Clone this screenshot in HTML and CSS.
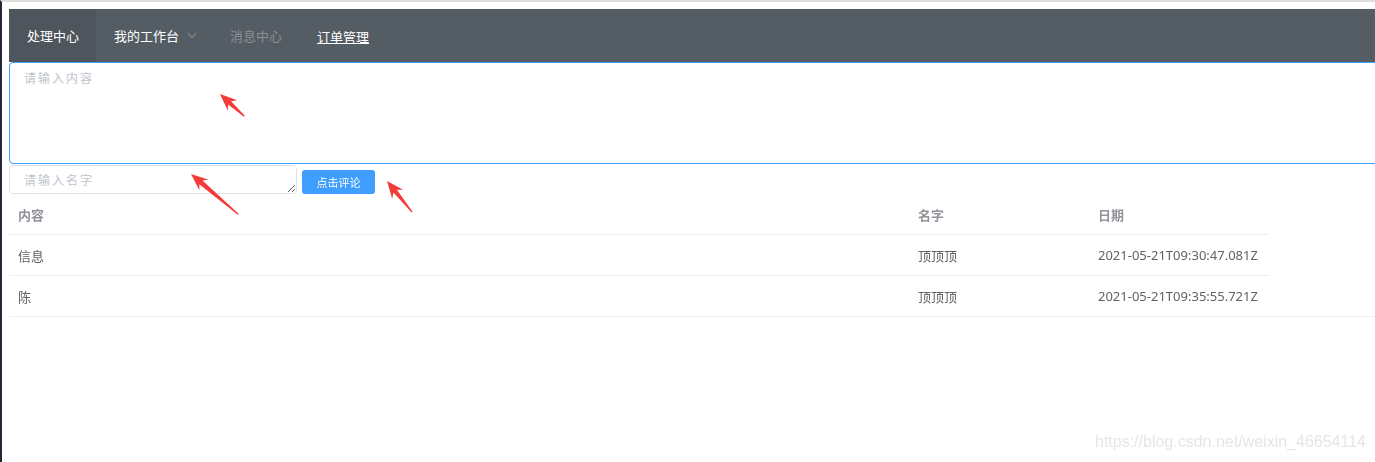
FILE: index.html
```html
<!DOCTYPE html>
<html lang="zh">
<head>
  <meta charset="UTF-8" />
  <meta name="viewport" content="width=device-width, initial-scale=1.0" />
  <title>评论</title>
  <link rel="stylesheet" href="styles.css">
</head>
<body>

<div class="app">
  <ul class="menu">
    <li class="menu-item active">处理中心</li>
    <li class="menu-item">我的工作台 <span class="caret"></span></li>
    <li class="menu-item disabled">消息中心</li>
    <li class="menu-item"><a href="#">订单管理</a></li>
  </ul>

  <textarea class="content-input" placeholder="请输入内容"></textarea>

  <div class="form-row">
    <textarea class="name-input" placeholder="请输入名字"></textarea>
    <button class="submit-btn">点击评论</button>
  </div>

  <div class="table-wrap">
    <table class="comments">
      <thead>
        <tr>
          <th class="col-content">内容</th>
          <th class="col-name">名字</th>
          <th class="col-date">日期</th>
        </tr>
      </thead>
      <tbody>
        <tr>
          <td>信息</td>
          <td>顶顶顶</td>
          <td>2021-05-21T09:30:47.081Z</td>
        </tr>
        <tr>
          <td>陈</td>
          <td>顶顶顶</td>
          <td>2021-05-21T09:35:55.721Z</td>
        </tr>
      </tbody>
    </table>
  </div>
</div>

<!-- screenshot annotations -->
<svg class="marks" width="1375" height="462" viewBox="0 0 1375 462">
  <g fill="#f53a3a">
    <polygon transform="translate(220 94) rotate(42.5)" points="0,0 17,-7 13,-2.2 33,-0.6 33,0.6 13,2.2 17,7" />
    <polygon transform="translate(191 174) rotate(40.4)" points="0,0 17,-7 13,-2.4 62,-0.6 62,0.6 13,2.4 17,7" />
    <polygon transform="translate(387 181) rotate(51.1)" points="0,0 17,-7 13,-2.2 40,-0.6 40,0.6 13,2.2 17,7" />
  </g>
</svg>

<div class="watermark">https://blog.csdn.net/weixin_46654114</div>

</body>
</html>
```

FILE: styles.css
```css
html {
  overflow: hidden;
}
body {
  margin: 0;
  height: 460px;
  font-family: "Noto Sans", "Noto Sans CJK SC", sans-serif;
  background-color: #ffffff;
  border-top: 2px solid #dedede;
  border-left: 2px solid #272636;
  position: relative;
}
.app {
  width: 1375px;
  padding: 7px 0 0 7px;
}
.menu {
  list-style: none;
  margin: 0;
  padding: 0;
  display: flex;
  height: 53px;
  background-color: #545c64;
}
.menu-item {
  display: flex;
  align-items: center;
  padding: 0 17px 0 18px;
  font-size: 13px;
  color: #ffffff;
  cursor: pointer;
}
.menu-item.active {
  background-color: #4e555c;
}
.menu-item.disabled {
  color: #8c9096;
  cursor: not-allowed;
}
.menu-item a {
  color: #ffffff;
  text-decoration: underline;
  padding-top: 2px;
}
.caret {
  display: inline-block;
  width: 5px;
  height: 5px;
  margin: -4px 0 0 10px;
  border-right: 1px solid #8c9096;
  border-bottom: 1px solid #8c9096;
  transform: rotate(45deg);
}
textarea {
  font-family: "Noto Sans", "Noto Sans CJK SC", sans-serif;
  box-sizing: border-box;
  display: block;
  outline: none;
}
textarea::placeholder {
  color: #c0c4cc;
  letter-spacing: 2px;
}
.content-input {
  width: 1380px;
  height: 102px;
  margin: 0;
  padding: 6px 14px;
  font-size: 12px;
  border: 1px solid #409eff;
  border-radius: 4px;
  resize: none;
}
.form-row {
  display: flex;
  align-items: flex-end;
  gap: 5px;
  margin-top: 1px;
}
.name-input {
  width: 288px;
  height: 29px;
  margin: 0;
  padding: 5px 14px;
  font-size: 12px;
  border: 1px solid #dcdfe6;
  border-radius: 4px;
}
.submit-btn {
  width: 73px;
  height: 24px;
  border: none;
  border-radius: 3px;
  background-color: #409eff;
  color: #ffffff;
  font-family: "Noto Sans", "Noto Sans CJK SC", sans-serif;
  font-size: 11px;
  cursor: pointer;
}
.table-wrap {
  margin-top: 1px;
  border-bottom: 1px solid #ebeef5;
  width: 1368px;
}
.comments {
  border-collapse: collapse;
  width: 1260px;
  table-layout: fixed;
}
.comments th,
.comments td {
  text-align: left;
  padding: 0 9px;
  font-size: 13px;
}
.comments th {
  height: 39px;
  color: #909399;
  font-weight: 600;
  border-bottom: 1px solid #ebeef5;
}
.comments td {
  height: 40px;
  color: #606266;
  border-bottom: 1px solid #ebeef5;
}
.comments tbody tr:last-child td {
  border-bottom: none;
}
.col-content {
  width: 882px;
}
.col-name,
.col-date {
  width: 162px;
}
.marks {
  position: absolute;
  left: -2px;
  top: -2px;
  pointer-events: none;
}
.watermark {
  position: absolute;
  right: 9px;
  top: 431px;
  font-family: "Liberation Sans", Arial, sans-serif;
  font-size: 16px;
  color: #e6e6e6;
}
```
